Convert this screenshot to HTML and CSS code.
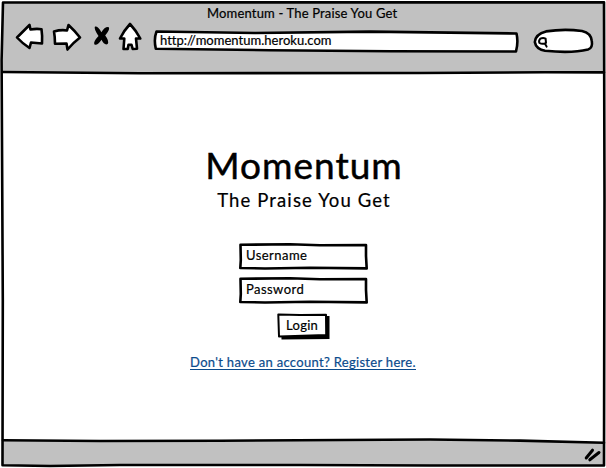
FILE: index.html
```
<!DOCTYPE html>
<html lang="en">
<head>
<meta charset="utf-8">
<title>Momentum - The Praise You Get</title>
<link rel="stylesheet" href="styles.css">
</head>
<body>
<div class="browser">
  <svg class="sketch frame" viewBox="0 0 606 468">
    <path class="chrome" d="M3 2.5 L604 2.5 L604.5 72.5 L140 73.2 L3 72 Z"/>
    <path class="chrome" d="M3 440 L250 440.3 L420 439.3 L510 440 L604.5 443 L604 465.5 L430 465.4 L300 464.5 L120 465.3 L50 466.5 L2.5 465.3 Z"/>
    <path class="outline" d="M3 2.5 L604 2.3 L604.5 200 L604 465.5 L430 465.5 L300 465 L120 465 L50 466 L2.5 465.2 L2.8 300 L1.6 60 Z"/>
  </svg>
  <header class="header">
    <div class="title"><span>Momentum - The Praise You Get</span></div>
    <div class="toolbar">
      <svg class="sketch back" viewBox="15 22 30 28"><path class="outline white" d="M17 37.5 L29.5 25 L30.5 29.5 Q36 28.5 41.5 29.2 Q42.5 36 42 43.5 L31 42.5 L29.5 48 Q22 43 17 37.5 Z"/></svg>
      <svg class="sketch forward" viewBox="51 22 32 30"><path class="outline white" d="M54 31.5 Q61 29.5 67 30.5 L68.5 25 Q75 31 80 37.5 Q74 42 67.5 49.5 L66.5 43.5 L55 43.8 Q55 37 54 31.5 Z"/></svg>
      <svg class="sketch stop" viewBox="92 24 19 24"><path d="M95 26.5 Q98.2 26 101.4 32.2 Q104.7 26.5 108.5 27 Q110.8 29 105.2 35.4 Q109.5 41 107.7 44 Q104.5 45.8 101.5 39.8 Q97.5 45.8 94.5 44.5 Q92.7 42.2 98.5 36 Q93.5 28.5 95 26.5 Z"/></svg>
      <svg class="sketch home" viewBox="117 21 26 31"><path class="outline white" d="M130 24 Q136 30.5 140.3 38.5 L136 38.5 L137 48.7 L132.7 49 L131.5 44.8 L128.5 44.8 L127.7 49 L123.5 49 L124.3 38.5 L120 38.5 Q124 30.5 130 24 Z"/></svg>
      <div class="address">
        <svg class="sketch fill" viewBox="152 28 370 27"><path class="outline white" d="M156.5 31.5 L255 33 L370 31.6 L516.5 33.5 Q518.5 42 516 51.5 L390 51.3 L270 50.2 L155.8 48.7 Q153.6 39 156.5 31.5 Z"/></svg>
        <span class="url">http://momentum.heroku.com</span>
      </div>
      <svg class="sketch search" viewBox="532 27 63 28">
        <path class="outline white" d="M546 31.4 Q564 28.5 582 31 Q591 33 591.8 41 Q593 48 588 49.5 Q572 53.5 545 50.8 Q536 49 534.8 42 Q535.5 34 546 31.4 Z"/>
        <path class="lens" d="M540.3 38.7 Q543 37.4 545.6 38.6 L546 42.8 Q542.5 44.8 539.5 43 Q538.3 41 540.3 38.7 Z M544.8 43.5 L546.6 46.6"/>
      </svg>
    </div>
    <svg class="sketch rule top" viewBox="0 69 606 7"><path class="outline" d="M3 72 L140 73.2 L420 73 L545 72.3 L604 72.4"/></svg>
  </header>
  <main class="page">
    <h1 class="name"><span>Momentum</span></h1>
    <h2 class="tagline"><span>The Praise You Get</span></h2>
    <div class="field">
      <svg class="sketch fill" viewBox="238 241 132 30"><path class="outline white" d="M240.5 244.8 L290 244.3 L320 245.3 L366 245 L366 256 L366.7 268.4 L310 267.8 L265 268.5 L240.3 268 L240.8 260 Z"/></svg>
      <span class="user">Username</span>
    </div>
    <div class="field">
      <svg class="sketch fill" viewBox="238 241 132 30"><path class="outline white" d="M240.5 244.8 L290 244.3 L320 245.3 L366 245 L366 256 L366.7 268.4 L310 267.8 L265 268.5 L240.3 268 L240.8 260 Z"/></svg>
      <span class="pass">Password</span>
    </div>
    <div class="login">
      <svg class="sketch fill" viewBox="275 312 58 30"><path d="M281 316 L329.5 316 L329.5 339 L281.5 339.5 Z"/><path class="button-face" d="M278.3 314.5 L300 315 L326 314.8 L326.2 335 L279 336.5 Z"/></svg>
      <span>Login</span>
    </div>
    <a class="register"><span>Don't have an account? Register here.</span></a>
  </main>
  <footer class="footer">
    <svg class="sketch rule bottom" viewBox="0 436 606 10"><path class="outline" d="M3 440.2 L100 441 L220 440.7 L430 439.5 L520 440.6 L604 442.8"/></svg>
    <svg class="sketch grip" viewBox="582 446 20 17"><path d="M586.2 458 L592.5 450.2 M589.8 459.8 L599 452.5"/></svg>
  </footer>
</div>
</body>
</html>
```
FILE: styles.css
```
* { box-sizing: border-box; }
body { margin: 0; background: #fff; color: #000; font: 13px/16px Lato, "Open Sans", sans-serif; -webkit-text-stroke: .2px currentColor; }
.browser { position: relative; width: 606px; height: 468px; display: flex; flex-direction: column; overflow: hidden; }
.sketch { display: block; flex: none; overflow: visible; }
.frame { position: absolute; inset: 0; width: 606px; height: 468px; }
.chrome { fill: #c1c1c1; }
.outline { fill: none; stroke: #000; stroke-width: 2.6; stroke-linejoin: round; stroke-linecap: round; }
.white { fill: #fff; }
.header, .page, .footer { position: relative; }
.header { height: 76px; display: flex; flex-direction: column; }
.title { height: 21px; padding: 5px 0 0 207px; letter-spacing: .17px; white-space: nowrap; }
.toolbar { height: 48px; display: flex; align-items: flex-start; padding-left: 15px; }
.back { width: 30px; height: 28px; margin-top: 1px; }
.forward { width: 32px; height: 30px; margin: 1px 0 0 6px; }
.stop { width: 19px; height: 24px; margin: 3px 0 0 9px; }
.home { width: 26px; height: 31px; margin-left: 6px; }
.address { position: relative; width: 370px; height: 27px; margin: 7px 0 0 9px; padding: 4px 8px; }
.fill { position: absolute; inset: 0; width: 100%; height: 100%; }
.address span, .field span, .login span { position: relative; }
.url { letter-spacing: .02px; }
.search { width: 63px; height: 28px; margin: 6px 0 0 10px; }
.lens { fill: none; stroke: #000; stroke-width: 2; stroke-linejoin: round; stroke-linecap: round; }
.top { width: 606px; height: 7px; }
.page { height: 360px; padding-left: 2px; display: flex; flex-direction: column; align-items: center; white-space: nowrap; }
.name { margin: 66px 0 0; height: 46px; font-size: 37px; line-height: 46px; font-weight: 400; letter-spacing: 1px; -webkit-text-stroke: .5px #000; }
.tagline { margin: 0; height: 24px; font-size: 18.5px; line-height: 24px; font-weight: 400; letter-spacing: 1.13px; }
.field { position: relative; width: 132px; height: 30px; padding: 6px 8px; letter-spacing: .45px; }
.tagline + .field { margin-top: 29px; }
.field + .field { margin-top: 4px; }
.login { position: relative; width: 58px; height: 30px; margin-top: 7px; padding: 5px 11px; letter-spacing: .3px; }
.button-face { fill: #fff; stroke: #000; stroke-width: 2; stroke-linejoin: round; }
.register { margin-top: 12px; height: 16px; margin-right: 2px; color: #0b4b8c; border-bottom: 1px solid #0b4b8c; letter-spacing: .31px; }
.footer { height: 32px; display: flex; flex-direction: column; }
.bottom { width: 606px; height: 10px; }
.grip { width: 20px; height: 17px; margin-left: 582px; fill: none; stroke: #000; stroke-width: 3; stroke-linecap: round; }
```
